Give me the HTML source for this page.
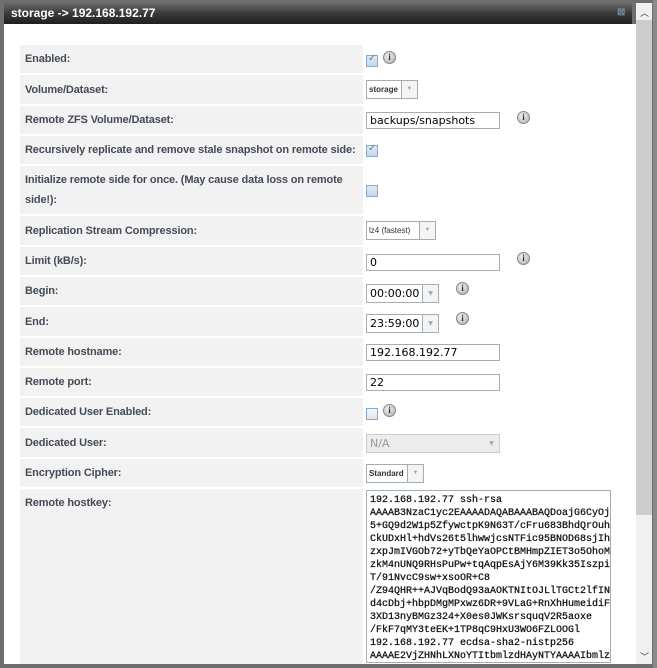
<!DOCTYPE html>
<html><head><style>
*{margin:0;padding:0;box-sizing:border-box}
html,body{width:657px;height:668px;overflow:hidden}
body{background:#8a8a8a;font-family:"Liberation Sans",sans-serif;position:relative}
.frame{position:absolute;left:0;top:0;width:653px;height:668px;background:#6e6e6e}
.title{position:absolute;left:4px;top:3px;width:628px;height:21px;background:linear-gradient(#6a6a6a,#3a3a3a 50%,#1e1e1e);color:#fff;font-weight:bold;font-size:12px;line-height:21px;padding-left:7px}
.x{position:absolute;left:617px;top:7px;color:#7a8896;font-size:10px;font-weight:bold}
.content{position:absolute;left:4px;top:24px;width:632px;height:640px;background:#fff}
.sb{position:absolute;left:636px;top:3px;width:16px;height:661px;background:#f0f0f0}
.thumb{position:absolute;left:636px;top:20px;width:16px;height:495px;background:#cdcdcd}
.up{position:absolute;left:640px;top:6px;font-size:9px;color:#444}
.dn{position:absolute;left:640px;top:650px;font-size:9px;color:#444}
.lab{position:absolute;left:20px;width:343px;background:#f2f2f2;font-weight:bold;font-size:11px;color:#444c58;padding-left:5px;display:flex;align-items:center;line-height:20px;letter-spacing:-0.15px}
.inp{position:absolute;left:366px;width:134px;height:17px;border:1px solid #a5acb2;background:#fff;font-family:"DejaVu Sans",sans-serif;font-size:11px;line-height:15px;padding-left:3px;color:#000}
.sel{position:absolute;left:366px;height:19px;border:1px solid #a5acb2;background:#fff;font-size:8px;font-weight:bold;color:#333;line-height:17px;padding-left:2px}
.sel .ar{position:absolute;right:0;top:0;width:16px;height:17px;border-left:1px solid #a5acb2;background:#f4f4f4;color:#9ab;font-size:6px;text-align:center;line-height:17px}
.cb{position:absolute;left:366px;width:12px;height:12px;border:1px solid #8aa8c8;background:linear-gradient(#dde8f4,#c8d8ea)}
.cb.on::after{content:"✓";position:absolute;left:1px;top:-3px;font-size:10px;color:#4a80c0}
.info{position:absolute;width:13px;height:13px;border-radius:50%;background:radial-gradient(circle at 40% 35%,#f4f4f4,#a8a8a8);border:1px solid #888;font-size:9px;font-weight:bold;color:#333;text-align:center;line-height:11px;font-family:"Liberation Serif",serif}
.ta{position:absolute;left:366px;top:490px;width:245px;height:173px;overflow:hidden;border:1px solid #a5acb2;background:#fff;font-family:"Liberation Mono",monospace;font-size:10px;line-height:13px;padding:3px 3px;color:#111;white-space:pre;-webkit-text-stroke:0.25px #111}
</style></head><body>
<div class="frame"></div>
<div class="title">storage -&gt; 192.168.192.77</div>
<div class="x">⊠</div>
<div class="content"></div>
<div class="sb"></div><div class="thumb"></div>
<div class="up">︿</div><div class="dn">﹀</div>

<div class="lab" style="top:45px;height:28px">Enabled:</div>
<div class="lab" style="top:75px;height:29px">Volume/Dataset:</div>
<div class="lab" style="top:106px;height:28px">Remote ZFS Volume/Dataset:</div>
<div class="lab" style="top:136px;height:28px;white-space:nowrap">Recursively replicate and remove stale snapshot on remote side:</div>
<div class="lab" style="top:166px;height:48px">Initialize remote side for once. (May cause data loss on remote side!):</div>
<div class="lab" style="top:216px;height:29px">Replication Stream Compression:</div>
<div class="lab" style="top:247px;height:28px">Limit (kB/s):</div>
<div class="lab" style="top:277px;height:28px">Begin:</div>
<div class="lab" style="top:307px;height:29px">End:</div>
<div class="lab" style="top:338px;height:28px">Remote hostname:</div>
<div class="lab" style="top:368px;height:28px">Remote port:</div>
<div class="lab" style="top:398px;height:28px">Dedicated User Enabled:</div>
<div class="lab" style="top:428px;height:29px">Dedicated User:</div>
<div class="lab" style="top:459px;height:28px">Encryption Cipher:</div>
<div class="lab" style="top:489px;height:175px;align-items:flex-start;padding-top:4px">Remote hostkey:</div>

<div class="cb on" style="top:55px"></div><div class="info" style="left:383px;top:51px">i</div>
<div class="sel" style="top:80px;width:52px">storage<div class="ar">▼</div></div>
<div class="inp" style="top:112px">backups/snapshots</div><div class="info" style="left:517px;top:111px">i</div>
<div class="cb on" style="top:145px"></div>
<div class="cb" style="top:185px"></div>
<div class="sel" style="top:221px;width:70px;font-weight:normal">lz4 (fastest)<div class="ar">▼</div></div>
<div class="inp" style="top:254px">0</div><div class="info" style="left:517px;top:252px">i</div>
<div class="sel" style="top:284px;width:73px;font-family:'DejaVu Sans',sans-serif;font-size:11px;font-weight:normal;color:#000;padding-left:3px">00:00:00<div class="ar">▼</div></div><div class="info" style="left:456px;top:282px">i</div>
<div class="sel" style="top:314px;width:73px;font-family:'DejaVu Sans',sans-serif;font-size:11px;font-weight:normal;color:#000;padding-left:3px">23:59:00<div class="ar">▼</div></div><div class="info" style="left:456px;top:312px">i</div>
<div class="inp" style="top:344px">192.168.192.77</div>
<div class="inp" style="top:374px">22</div>
<div class="cb" style="top:408px;background:linear-gradient(#f4f7fb,#dde6f0)"></div><div class="info" style="left:383px;top:404px">i</div>
<div class="sel" style="top:434px;width:134px;background:#ececec;border-color:#ccc;font-family:'DejaVu Sans',sans-serif;font-size:11px;font-weight:normal;color:#999;padding-left:3px">N/A<div class="ar" style="background:#ececec;border-color:#ececec">▼</div></div>
<div class="sel" style="top:464px;width:58px">Standard<div class="ar">▼</div></div>
<div class="ta">192.168.192.77 ssh-rsa
AAAAB3NzaC1yc2EAAAADAQABAAABAQDoajG6CyOj
5+GQ9d2W1p5ZfywctpK9N63T/cFru683BhdQrOuh
CkUDxHl+hdVs26t5lhwwjcsNTFic95BNOD68sjIh
zxpJmIVGOb72+yTbQeYaOPCtBMHmpZIET3o5OhoM
zkM4nUNQ9RHsPuPw+tqAqpEsAjY6M39Kk35Iszpi
T/91NvcC9sw+xsoOR+C8
/Z94QHR++AJVqBodQ93aAOKTNItOJLlTGCt2lfIN
d4cDbj+hbpDMgMPxwz6DR+9VLaG+RnXhHumeidiF
3XD13nyBMGz324+X0es0JWKsrsquqV2R5aoxe
/FkF7qMY3teEK+1TP8qC9HxU3WO6FZLOOGl
192.168.192.77 ecdsa-sha2-nistp256
AAAAE2VjZHNhLXNoYTItbmlzdHAyNTYAAAAIbmlz</div>
</body></html>
